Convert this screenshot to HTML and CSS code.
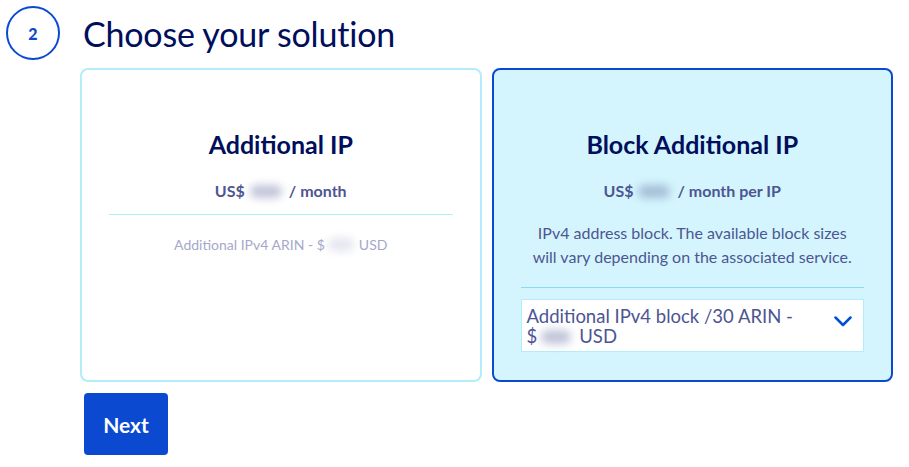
FILE: index.html
```html
<!DOCTYPE html>
<html lang="en">
<head>
  <meta charset="utf-8" />
  <meta name="viewport" content="width=device-width,initial-scale=1" />
  <title>Choose your solution</title>
  <link rel="stylesheet" href="styles.css">
</head>
<body>
  <section class="step">
    <header class="step-head">
      <span class="step-num">2</span>
      <h1>Choose your solution</h1>
    </header>

    <div class="step-body">
      <div class="offers">
        <div class="offer">
          <h2>Additional IP</h2>
          <p class="price">US$<span class="blur"></span>/ month</p>
          <hr>
          <p class="note">Additional IPv4 ARIN - $<span class="blur small"></span>USD</p>
        </div>

        <div class="offer selected">
          <h2>Block Additional IP</h2>
          <p class="price">US$<span class="blur"></span>/ month per IP</p>
          <p class="desc">IPv4 address block. The available block sizes<br>will vary depending on the associated service.</p>
          <hr>
          <div class="select">
            <span class="select-text">Additional IPv4 block /30 ARIN -<br>$<span class="blur"></span>USD</span>
            <svg class="chevron" width="18" height="11" viewBox="0 0 18 11" aria-hidden="true">
              <path d="M1.5 1.5 L9 9 L16.5 1.5" fill="none" stroke="#0050d7" stroke-width="2.5" stroke-linecap="round" stroke-linejoin="round"/>
            </svg>
          </div>
        </div>
      </div>

      <button class="next-btn">Next</button>
    </div>
  </section>
</body>
</html>
```

FILE: styles.css
```css
:root{
  --blue:#0b4ad0;
  --navy:#000e5c;
  --text:#4d5592;
  --muted:#a5a8c9;
  --cyan:#b3ecfb;
  --cyan-bg:#d4f5fd;
}

html,body{height:100%}
body{
  margin:0;
  background:#fff;
  font-family:Lato,"Open Sans",Arial,sans-serif;
  color:var(--text);
}

.step{padding:6px 0 0 6px;}

.step-head{display:flex; align-items:center; gap:23px;}
.step-num{
  width:50px; height:50px; border-radius:50%;
  border:2px solid var(--blue);
  display:inline-flex; align-items:center; justify-content:center;
  color:var(--blue); font-weight:900; font-size:16px;
}
.step-head h1{
  margin:0; font-weight:400; font-size:34px; color:var(--navy);
  letter-spacing:-0.2px;
}

.step-body{margin:8px 0 0 74px;}

.offers{display:flex; gap:10px; width:813px;}
.offer{
  flex:1; box-sizing:border-box; height:314px;
  border:2px solid var(--cyan); border-radius:8px;
  background:#fff;
  padding:58px 27px 0;
  text-align:center;
}
.offer.selected{border-color:var(--blue); background:var(--cyan-bg);}

.offer h2{margin:0; font-size:25px; font-weight:700; color:var(--navy); line-height:32px;}
.price{margin:21px 0 0; font-size:16px; font-weight:700; line-height:20px;}
.offer hr{border:0; border-top:1px solid var(--cyan); margin:13px 0 0;}
.offer.selected hr{border-top-color:#8ed8f0; margin-top:18px;}

.note{margin:20px 0 0; font-size:14px; color:var(--muted); line-height:20px;}
.desc{margin:20px -4px 0; font-size:16px; line-height:24px; white-space:nowrap;}

.blur{
  display:inline-block; width:32px; height:13px; margin:0 7px 0 5px;
  vertical-align:-1px;
  background:rgba(77,85,146,0.35); border-radius:7px; filter:blur(4px);
}
.blur.small{width:26px; margin:0 5px 0 3px; background:rgba(165,168,201,0.3);}

.select{
  margin-top:11px; background:#fff; border:1px solid var(--cyan);
  display:flex; align-items:center; justify-content:space-between;
  padding:5px 11px 5px 5px; height:53px; box-sizing:border-box;
  text-align:left;
}
.select-text{font-size:18.5px; line-height:20px; color:var(--text);}
.select-text .blur{width:30px; height:14px; margin:0 8px 0 4px;}
.chevron{margin-top:-8px;}

.next-btn{
  margin:11px 0 0 4px; width:84px; height:62px;
  background:var(--blue); color:#fff; border:0; border-radius:4px;
  font-family:inherit; font-size:21px; font-weight:700; cursor:pointer;
}
```
